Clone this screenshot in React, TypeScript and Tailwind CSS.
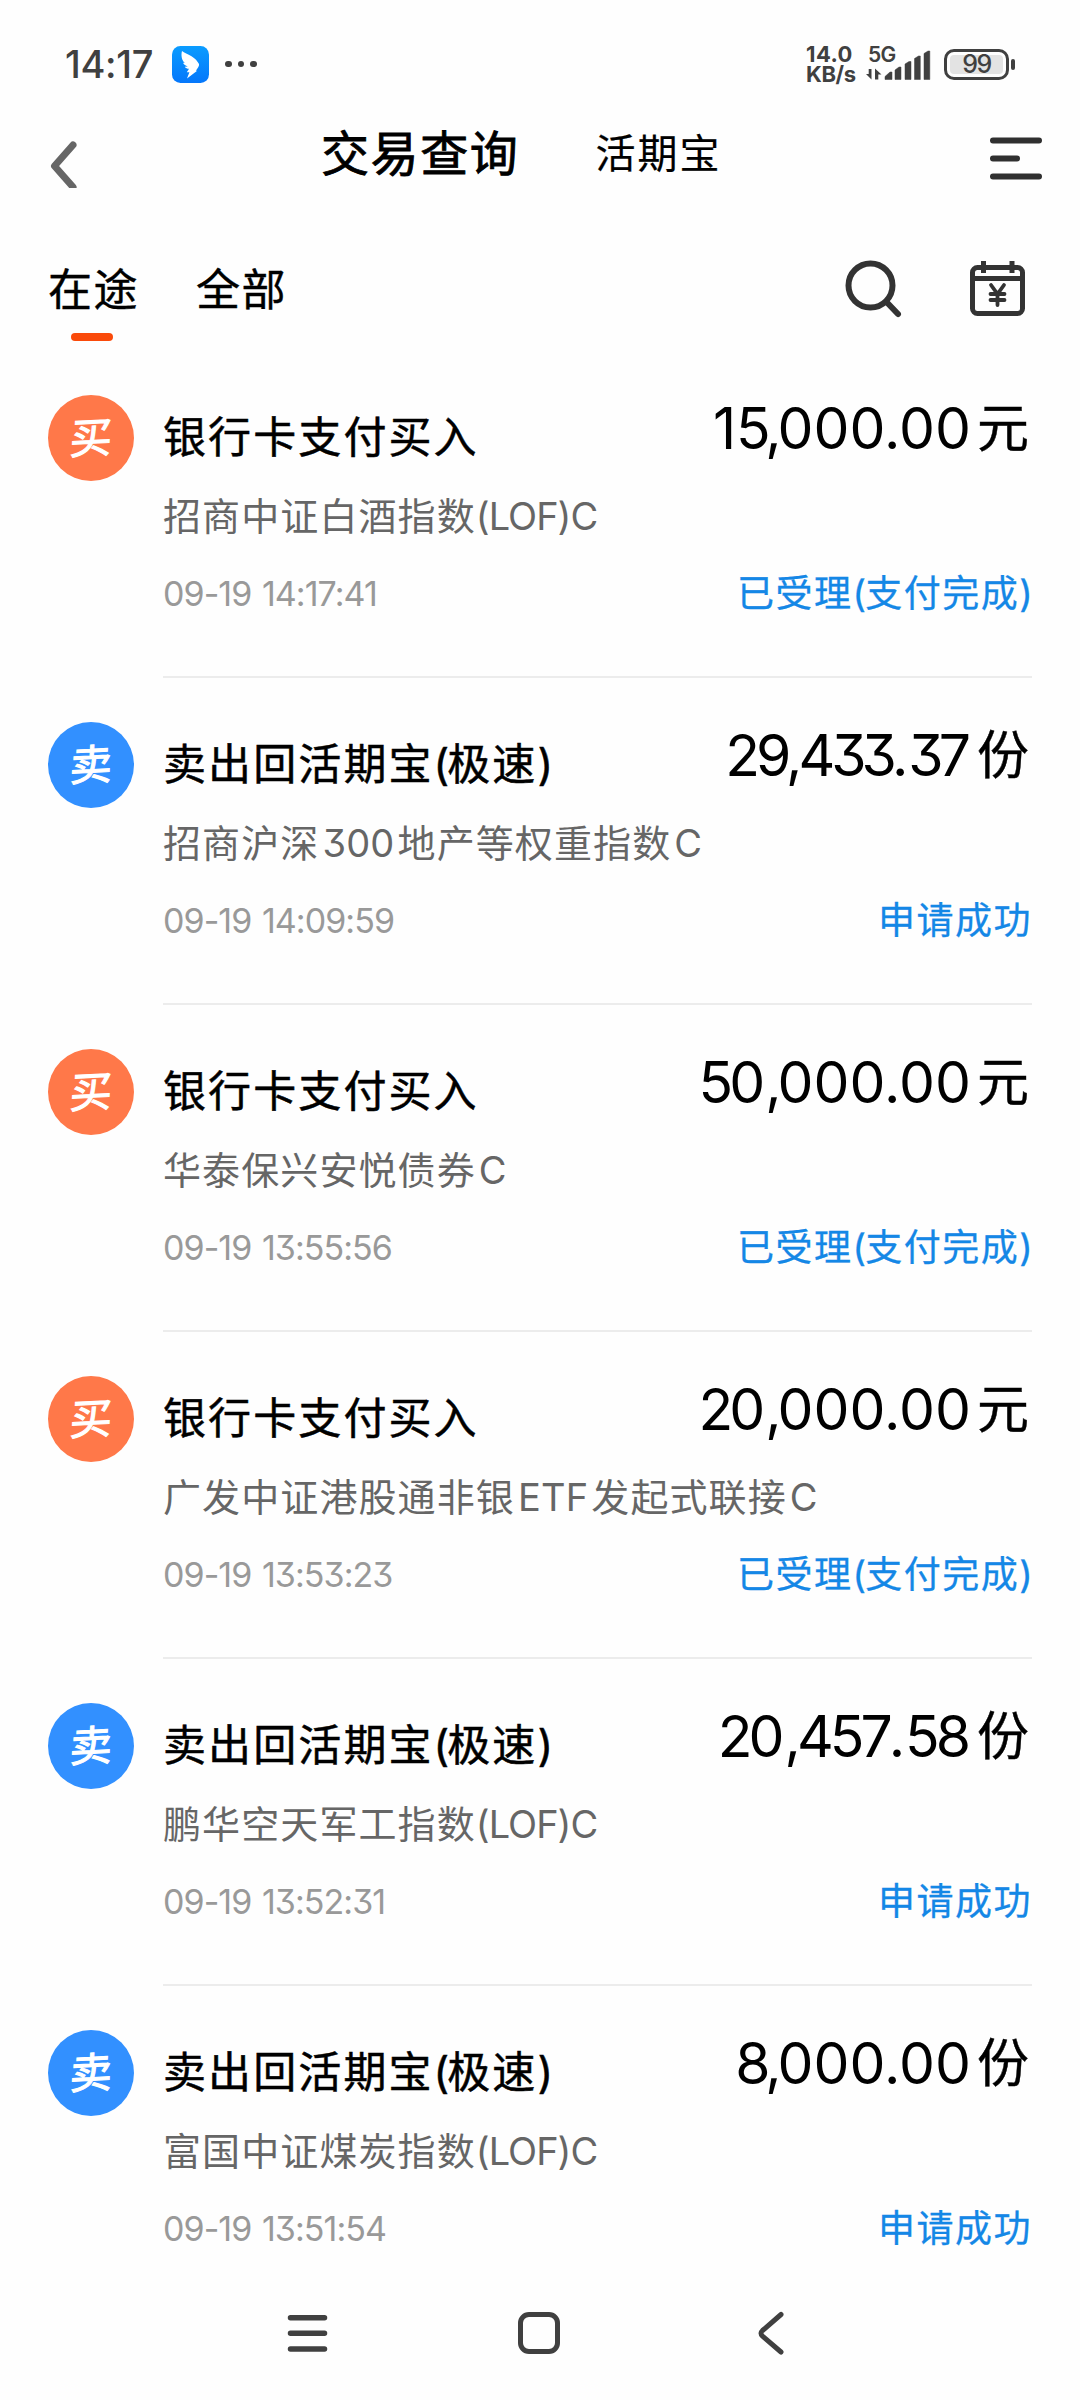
type Trade = {
  type: "buy" | "sell";
  title: string;
  fund: string;
  time: string;
  amount: string;
  unit: string;
  status: string;
};

const trades: Trade[] = [
  { type: "buy", title: "银行卡支付买入", fund: "招商中证白酒指数(LOF)C", time: "09-19 14:17:41", amount: "15,000.00", unit: "元", status: "已受理(支付完成)" },
  { type: "sell", title: "卖出回活期宝(极速)", fund: "招商沪深300地产等权重指数C", time: "09-19 14:09:59", amount: "29,433.37", unit: "份", status: "申请成功" },
  { type: "buy", title: "银行卡支付买入", fund: "华泰保兴安悦债券C", time: "09-19 13:55:56", amount: "50,000.00", unit: "元", status: "已受理(支付完成)" },
  { type: "buy", title: "银行卡支付买入", fund: "广发中证港股通非银ETF发起式联接C", time: "09-19 13:53:23", amount: "20,000.00", unit: "元", status: "已受理(支付完成)" },
  { type: "sell", title: "卖出回活期宝(极速)", fund: "鹏华空天军工指数(LOF)C", time: "09-19 13:52:31", amount: "20,457.58", unit: "份", status: "申请成功" },
  { type: "sell", title: "卖出回活期宝(极速)", fund: "富国中证煤炭指数(LOF)C", time: "09-19 13:51:54", amount: "8,000.00", unit: "份", status: "申请成功" },
];

// latin runs sit tighter than the chinese characters around them
function FundName({ text }: { text: string }) {
  return (
    <>
      {text.split(/([\x20-\x7e]+)/).map((part, i) => {
        if (i % 2 === 0) return part;
        if (part.startsWith("(")) {
          return <span key={i} className="tracking-[-1px]">{part}</span>;
        }
        return <span key={i} className="mx-[3px] tracking-[0.2px]">{part}</span>;
      })}
    </>
  );
}

// pulls the brackets in a little
function Bracketed({ text, tight }: { text: string; tight: string }) {
  return (
    <>
      {text.split(/([()])/).map((part, i) =>
        i % 2 === 0 ? part : <span key={i} className={tight}>{part}</span>
      )}
    </>
  );
}

function Amount({ value }: { value: string }) {
  return (
    <span className="text-[57px] leading-[60px]">
      {value.slice(0, -1).split("").map((c, i) => {
        if (c === ",") return <span key={i} className="tracking-[-4px]">{c}</span>;
        if (c === "3") return <span key={i} className="tracking-[-5px]">{c}</span>;
        if (/[24-9]/.test(c)) return <span key={i} className="tracking-[-4px]">{c}</span>;
        return <span key={i}>{c}</span>;
      })}
      {value.slice(-1)}
    </span>
  );
}

function StatusBar() {
  return (
    <div className="flex h-[110px] shrink-0 items-center justify-between pt-[18px] pl-[65px] pr-[65px] text-[#404040]">
      <div className="flex items-center">
        <span className="w-[107px] text-[38px] leading-none font-medium tracking-[-0.3px]">14:17</span>
        <svg width="37" height="37" viewBox="0 0 37 37">
          <defs>
            <linearGradient id="ding" x1="0" y1="0" x2="0" y2="1">
              <stop offset="0" stopColor="#0a9cff" />
              <stop offset="1" stopColor="#0577fb" />
            </linearGradient>
          </defs>
          <rect width="37" height="37" rx="8.500" fill="url(#ding)" />
          <path
            d="M10 5c2 2 6 3 9.500 5.200 3.500 2.200 6 4.800 7.500 7.800.6 1.500-1.200 4.200-3.200 6.800h1.400L15 32.500l2.400-6.300h-2.600l2.200-3.400c-1.800 0-3.400-.6-4.200-2l3-.4c-2.200-.6-4-1.800-4.800-3.600l1.800.1C10 14.500 8.700 10 10 5z"
            fill="#fff"
          />
        </svg>
        <div className="ml-[16px] flex gap-[6px]">
          <i className="size-[6.500px] rounded-full bg-[#404040]" />
          <i className="size-[6.500px] rounded-full bg-[#404040]" />
          <i className="size-[6.500px] rounded-full bg-[#404040]" />
        </div>
      </div>
      <div className="flex items-center">
        <div className="w-[60px] text-[22px] leading-[20.500px] font-bold">
          <div className="tracking-[0.4px]">14.0</div>
          <div className="tracking-[-0.4px]">KB/s</div>
        </div>
        <div className="relative h-[34px] w-[78px]">
          <span className="absolute top-0 left-[2px] text-[21px] leading-[15px] font-semibold tracking-[-0.8px]">5G</span>
          <svg className="absolute inset-0" width="78" height="34" viewBox="0 0 78 34" fill="currentColor">
            <path d="M5.500 22v10.500l-5.500-5.500h2.700v-5zM9 32.500v-11l6.500 6h-3.200v5z" />
            <path d="M19 32.500v-3l5-4.500h2v7.500zM29 32.500v-9.500l4-3h2v12.500zM39 32.500v-15.500l4-2.500h2v18zM48.500 32.500v-21l4-2.500h1.800v23.500zM58 32.500v-26l4-2.500h1.800v28.500z" stroke="currentColor" strokeWidth=".5" strokeLinejoin="round" />
          </svg>
        </div>
        <div className="flex h-[31px] w-[65px] items-center justify-center rounded-[10px] border-[3px] border-[#404040] p-[3px]">
          <div className="flex h-full w-full items-center justify-center rounded-[4px] bg-[#e3e3e3] text-[25px] leading-none font-medium tracking-[-1.500px]">99</div>
        </div>
        <i className="ml-[2px] h-[11px] w-[4px] rounded-[2px] bg-[#404040]" />
      </div>
    </div>
  );
}

function Header() {
  return (
    <div className="flex h-[110px] shrink-0 items-start pr-[37px] pl-[49px] text-black">
      <svg className="mt-[31px]" width="28" height="47" viewBox="0 0 28 47" fill="none" stroke="#666" strokeWidth="7" strokeLinecap="round" strokeLinejoin="round">
        <path d="M24 4 5.500 25l18.500 21" />
      </svg>
      <div className="mt-[14px] ml-[244px] text-[48px] leading-[60px] tracking-[1.600px] [-webkit-text-stroke:0.8px_black]">交易查询</div>
      <div className="mt-[14px] ml-[76px] text-[40px] leading-[60px] tracking-[2px] [-webkit-text-stroke:0.2px_black]">活期宝</div>
      <svg className="mt-[26px] ml-auto" width="54" height="44" viewBox="0 0 54 44" stroke="#303030" strokeWidth="6" strokeLinecap="round">
        <path d="M4 4.500h46M4 22.500h24M4 40.500h46" />
      </svg>
    </div>
  );
}

function Tabs() {
  return (
    <div className="flex h-[131px] shrink-0 items-start pr-[53px] pl-[48px] text-[44px] leading-[60px] whitespace-nowrap text-black [-webkit-text-stroke:0.4px_black]">
      <div className="mt-[40px] w-[91px]">
        <div className="tracking-[1.600px]">在途</div>
        <div className="mt-[13px] ml-[23px] h-[8px] w-[42px] rounded-full bg-[#fa4a0a]" />
      </div>
      <div className="mt-[40px] ml-[57px] tracking-[1.600px]">全部</div>
      <svg className="mt-[40px] ml-auto" width="60" height="60" viewBox="0 0 60 60" fill="none" stroke="#333" strokeWidth="6">
        <circle cx="27.500" cy="25.500" r="22" />
        <path d="M44 42.500 55 54" strokeLinecap="round" />
      </svg>
      <svg className="mt-[40px] ml-[67px]" width="57" height="57" viewBox="0 0 57 57" fill="none" stroke="#333" strokeWidth="5">
        <rect x="2.500" y="7.500" width="50" height="46" rx="5" />
        <path d="M3 18.500h49M13.500 1v12M42 1v12" />
        <path d="m21 25 6.500 9 6.500-9M20.500 34h14M20.500 40h14M27.500 34v11" strokeWidth="3.800" strokeLinecap="round" />
      </svg>
    </div>
  );
}

function TradeRow({ trade }: { trade: Trade }) {
  const buy = trade.type === "buy";
  return (
    <div className="flex h-[327px] shrink-0 pr-[48px] pl-[48px]">
      <div
        className={`mt-[44px] flex size-[86px] shrink-0 items-center justify-center rounded-full text-[42px] leading-none text-white ${
          buy ? "bg-[#ff7849]" : "bg-[#3290ff]"
        }`}
      >
        <span className="-rotate-3 -skew-x-6 [-webkit-text-stroke:1.1px_white]">{buy ? "买" : "卖"}</span>
      </div>
      <div className="ml-[29px] flex flex-1 justify-between border-b-2 border-[#ececec] whitespace-nowrap">
        <div className="w-0">
          <div className="mt-[56px] text-[43px] leading-[60px] tracking-[2.100px] text-black [-webkit-text-stroke:0.5px_black]">
            <Bracketed text={trade.title} tight="tracking-[-2.100px]" />
          </div>
          <div className="mt-[19px] text-[38px] leading-[60px] tracking-[1.100px] text-[#666]">
            <FundName text={trade.fund} />
          </div>
          <div className="mt-[18px] text-[34px] leading-[60px] tracking-[-0.95px] [word-spacing:2px] text-[#999]">{trade.time}</div>
        </div>
        <div className="flex flex-col items-end">
          <div className="mt-[48px] mr-[3px] flex text-black">
            <Amount value={trade.amount} />
            <span className="ml-[6px] text-[52px] leading-[60px] [-webkit-text-stroke:0.4px_black]">{trade.unit}</span>
          </div>
          <div className="mt-[105px] text-[37px] leading-[60px] tracking-[1.500px] text-[#1487e6] [-webkit-text-stroke:0.3px_#1487e6]">
            <Bracketed text={trade.status} tight="tracking-[-0.7px]" />
          </div>
        </div>
      </div>
    </div>
  );
}

function NavBar() {
  return (
    <div className="flex h-[132px] shrink-0 items-start pt-[43px] pl-[286px]">
      <svg width="44" height="44" viewBox="0 0 44 44" stroke="#404040" strokeWidth="5.500" strokeLinecap="round">
        <path d="M4.500 6.700h34M4.500 22.300h34M4.500 38h34" />
      </svg>
      <svg className="ml-[187px]" width="44" height="44" viewBox="0 0 44 44" fill="none" stroke="#404040" strokeWidth="5">
        <rect x="3.500" y="3.500" width="37" height="37" rx="8.500" />
      </svg>
      <svg className="ml-[195px]" width="30" height="44" viewBox="0 0 30 44" fill="none" stroke="#404040" strokeWidth="5" strokeLinecap="round" strokeLinejoin="round">
        <path d="M25 3.500 6.500 19.500q-3 2.800 0 5.600L25 41" />
      </svg>
    </div>
  );
}

export default function App() {
  return (
    <div
      lang="zh-CN"
      className="flex h-[2400px] w-[1080px] flex-col overflow-hidden bg-[#fefefe] font-['Inter','Noto_Sans_CJK_SC',sans-serif] [font-feature-settings:'cv09']"
    >
      <StatusBar />
      <Header />
      <Tabs />
      <div className="flex min-h-0 flex-1 flex-col overflow-hidden">
        {trades.map((trade) => (
          <TradeRow key={trade.time} trade={trade} />
        ))}
      </div>
      <NavBar />
    </div>
  );
}
